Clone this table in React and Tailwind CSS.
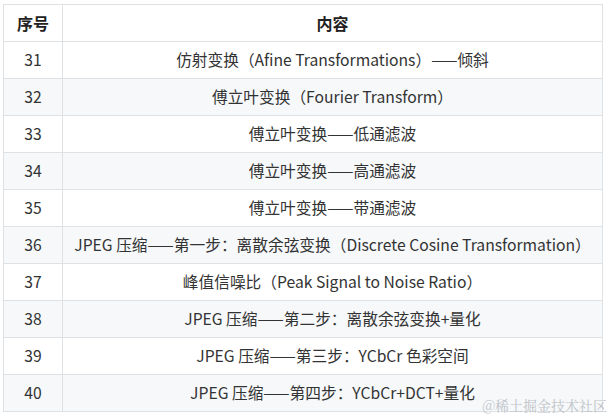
import React from "react";

const rows = [
  ["31", "仿射变换（Afine Transformations）——倾斜"],
  ["32", "傅立叶变换（Fourier Transform）"],
  ["33", "傅立叶变换——低通滤波"],
  ["34", "傅立叶变换——高通滤波"],
  ["35", "傅立叶变换——带通滤波"],
  ["36", "JPEG 压缩——第一步：离散余弦变换（Discrete Cosine Transformation）"],
  ["37", "峰值信噪比（Peak Signal to Noise Ratio）"],
  ["38", "JPEG 压缩——第二步：离散余弦变换+量化"],
  ["39", "JPEG 压缩——第三步：YCbCr 色彩空间"],
  ["40", "JPEG 压缩——第四步：YCbCr+DCT+量化"],
];

const App = () => {
  return (
    <div
      className="relative w-[611px] h-[419px] bg-white pt-[4px] pl-[3px] text-[#333]"
      style={{ fontFamily: '"Noto Sans CJK SC", sans-serif' }}
    >
      <table className="w-[600px] border-collapse text-[15.7px]">
        <thead>
          <tr className="h-[37px] bg-white">
            <th className="w-[59px] border border-[#dfe2e5] font-bold text-[16px] text-[#222]">序号</th>
            <th className="border border-[#dfe2e5] font-bold text-[16px] text-[#222]">内容</th>
          </tr>
        </thead>
        <tbody>
          {rows.map(([n, text], i) => (
            <tr key={n} className={`h-[37px] ${i % 2 === 1 ? "bg-[#f6f8fa]" : "bg-white"}`}>
              <td className="border border-[#dfe2e5] text-center">{n}</td>
              <td className="border border-[#dfe2e5] text-center whitespace-nowrap">{text}</td>
            </tr>
          ))}
        </tbody>
      </table>

      {/* watermark */}
      <div
        className="absolute right-[4px] bottom-[3px] text-[14px] text-[#bfc3c8]"
        style={{ fontFamily: '"Noto Serif CJK SC", "Noto Sans CJK SC", serif' }}
      >
        @稀土掘金技术社区
      </div>
    </div>
  );
};

export default App;
